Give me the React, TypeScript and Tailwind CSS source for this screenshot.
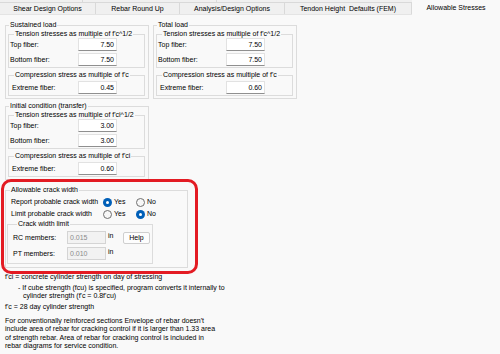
import React from "react";

type BoxProps = {
  label: string;
  className?: string;
  legendMl?: string;
  children?: React.ReactNode;
};

function Box({ label, className = "", legendMl = "ml-[1px]", children }: BoxProps) {
  return (
    <fieldset className={`border border-[#dcdcdc] min-w-0 ${className}`}>
      <legend className={`${legendMl} px-[1px] leading-[8px] whitespace-nowrap`}>{label}</legend>
      {children}
    </fieldset>
  );
}

function Field({ label, value, pl = "pl-[1px]", className = "" }: { label: string; value: string; pl?: string; className?: string }) {
  return (
    <div className={`flex items-center h-[13px] ${className}`}>
      <span className={`${pl} w-[69px] leading-[13px] whitespace-nowrap`}>{label}</span>
      <div className="w-[39px] h-[13px] bg-white border border-[#e2e2e2] border-b-[#8f8f8f] text-right pr-[2px] leading-[11px]">
        {value}
      </div>
    </div>
  );
}

function StressGroup({ title, tension, compression, values }: { title: string; tension: string; compression: string; values: [string, string, string] }) {
  return (
    <Box label={title} className="w-[144px] pl-[2px] pr-[3px] pb-[2px]">
      <Box label={tension} legendMl="ml-[5px]" className="mt-[1px] pb-[1px]">
        <Field label="Top fiber:" value={values[0]} />
        <Field label="Bottom fiber:" value={values[1]} className="mt-[2px]" />
      </Box>
      <Box label={compression} legendMl="ml-[5px]" className="mt-[3px] pb-[1px]">
        <Field label="Extreme fiber:" value={values[2]} pl="pl-[3px]" className="mt-[2px]" />
      </Box>
    </Box>
  );
}

function Radio({ checked, label, className = "" }: { checked: boolean; label: string; className?: string }) {
  return (
    <div className={`flex items-center ${className}`}>
      {checked ? (
        <div className="w-[9px] h-[9px] rounded-full bg-[#005fb8] flex items-center justify-center">
          <div className="w-[3px] h-[3px] rounded-full bg-white" />
        </div>
      ) : (
        <div className="w-[9px] h-[9px] rounded-full border border-[#6f6f6f] bg-[#f7f7f7]" />
      )}
      <span className="ml-[2px] leading-[10px]">{label}</span>
    </div>
  );
}

function DisabledInput({ value }: { value: string }) {
  return (
    <div className="w-[39px] h-[13px] bg-[#f2f2f2] border border-[#d4d4d4] text-[#8a8a8a] pl-[2px] leading-[11px]">{value}</div>
  );
}

export default function App() {
  const tabs = [
    { label: "Shear Design Options", w: "w-[96px]" },
    { label: "Rebar Round Up", w: "w-[84px]" },
    { label: "Analysis/Design Options", w: "w-[105px]" },
    { label: "Tendon Height  Defaults (FEM)", w: "w-[127px]" },
  ];
  return (
    <div className="relative w-[500px] h-[354px] overflow-hidden bg-[#f9f9f9] text-black text-[7px] font-['Liberation_Sans',Arial,sans-serif]">
      {/* Tabs */}
      <div className="flex h-[15px]">
        <div className="flex flex-col w-[412px]">
          <div className="flex h-[3px] bg-[#f0f0f0] border-b border-[#d9d9d9]">
            <div className="w-[83px] border-r border-[#d9d9d9]" />
            <div className="w-[134px] border-r border-[#d9d9d9]" />
            <div className="flex-1" />
          </div>
          <div className="flex h-[12px] bg-[#f0f0f0] border-b border-[#e4e4e4]">
            {tabs.map((t) => (
              <div
                key={t.label}
                className={`${t.w} h-full border-r border-[#d9d9d9] flex items-center justify-center whitespace-pre leading-[10px]`}
              >
                {t.label}
              </div>
            ))}
          </div>
        </div>
        <div className="w-[88px] h-[15px] bg-[#f9f9f9] flex justify-center pt-[3px] leading-[9px] whitespace-nowrap">
          Allowable Stresses
        </div>
      </div>

      {/* Content */}
      <div className="pl-[5px] pt-[6px]">
        <div className="flex items-start gap-[4px]">
          <StressGroup
            title="Sustained load"
            tension="Tension stresses as multiple of f'c^1/2"
            compression="Compression stress as multiple of f'c"
            values={["7.50", "7.50", "0.45"]}
          />
          <StressGroup
            title="Total load"
            tension="Tension stresses as multiple of f'c^1/2"
            compression="Compression stress as multiple of f'c"
            values={["7.50", "7.50", "0.60"]}
          />
        </div>

        <div className="mt-[3px]">
          <StressGroup
            title="Initial condition (transfer)"
            tension="Tension stresses as multiple of f'ci^1/2"
            compression="Compression stress as multiple of f'ci"
            values={["3.00", "3.00", "0.60"]}
          />
        </div>

        {/* Allowable crack width */}
        <Box label="Allowable crack width" legendMl="ml-[3px]" className="mt-[6px] w-[183px] pl-[1px] pb-[3px]">
          <div className="flex items-center h-[10px] mt-[3px]">
            <span className="w-[96px] pl-[4px] whitespace-nowrap">Report probable crack width</span>
            <Radio checked label="Yes" className="w-[33px]" />
            <Radio checked={false} label="No" />
          </div>
          <div className="flex items-center h-[10px] mt-[2px]">
            <span className="w-[96px] pl-[4px] whitespace-nowrap">Limit probable crack width</span>
            <Radio checked={false} label="Yes" className="w-[33px]" />
            <Radio checked label="No" />
          </div>
          <Box label="Crack width limit" legendMl="ml-[4px]" className="mt-[1px] w-[146px] pl-[5px] pb-[3px]">
            <div className="flex items-start mt-[3px]">
              <span className="w-[54px] leading-[13px] whitespace-nowrap">RC members:</span>
              <DisabledInput value="0.015" />
              <span className="ml-[2px] w-[15px] leading-[9px]">in</span>
              <button className="mt-[1px] w-[27px] h-[12px] bg-[#fdfdfd] border border-[#cfcfcf] rounded-[2px] leading-[10px] text-[7px]">
                Help
              </button>
            </div>
            <div className="flex items-start mt-[3px]">
              <span className="w-[54px] leading-[13px] whitespace-nowrap">PT members:</span>
              <DisabledInput value="0.010" />
              <span className="ml-[2px] w-[15px] leading-[9px]">in</span>
            </div>
          </Box>
        </Box>

        {/* Notes */}
        <div className="mt-[5px] leading-[8.5px] whitespace-nowrap">f'ci = concrete cylinder strength on day of stressing</div>
        <div className="mt-[2px] ml-[13px] leading-[8.5px] whitespace-nowrap">- If cube strength (fcu) is specified, program converts it internally to</div>
        <div className="ml-[18px] leading-[8.5px] whitespace-nowrap">cylinder strength (f'c = 0.8f'cu)</div>
        <div className="mt-[2px] leading-[8.5px] whitespace-nowrap">f'c = 28 day cylinder strength</div>
        <div className="mt-[5.5px] leading-[8.5px] whitespace-nowrap">
          <div>For conventionally reinforced sections Envelope of rebar doesn't</div>
          <div>include area of rebar for cracking control if it is larger than 1.33 area</div>
          <div>of strength rebar. Area of rebar for cracking control is included in</div>
          <div>rebar diagrams for service condition.</div>
        </div>
      </div>

      {/* Red annotation frame */}
      <div className="absolute left-[1px] top-[179px] w-[197px] h-[95px] border-[3px] border-[#e31b23] rounded-[10px] pointer-events-none" />
    </div>
  );
}
